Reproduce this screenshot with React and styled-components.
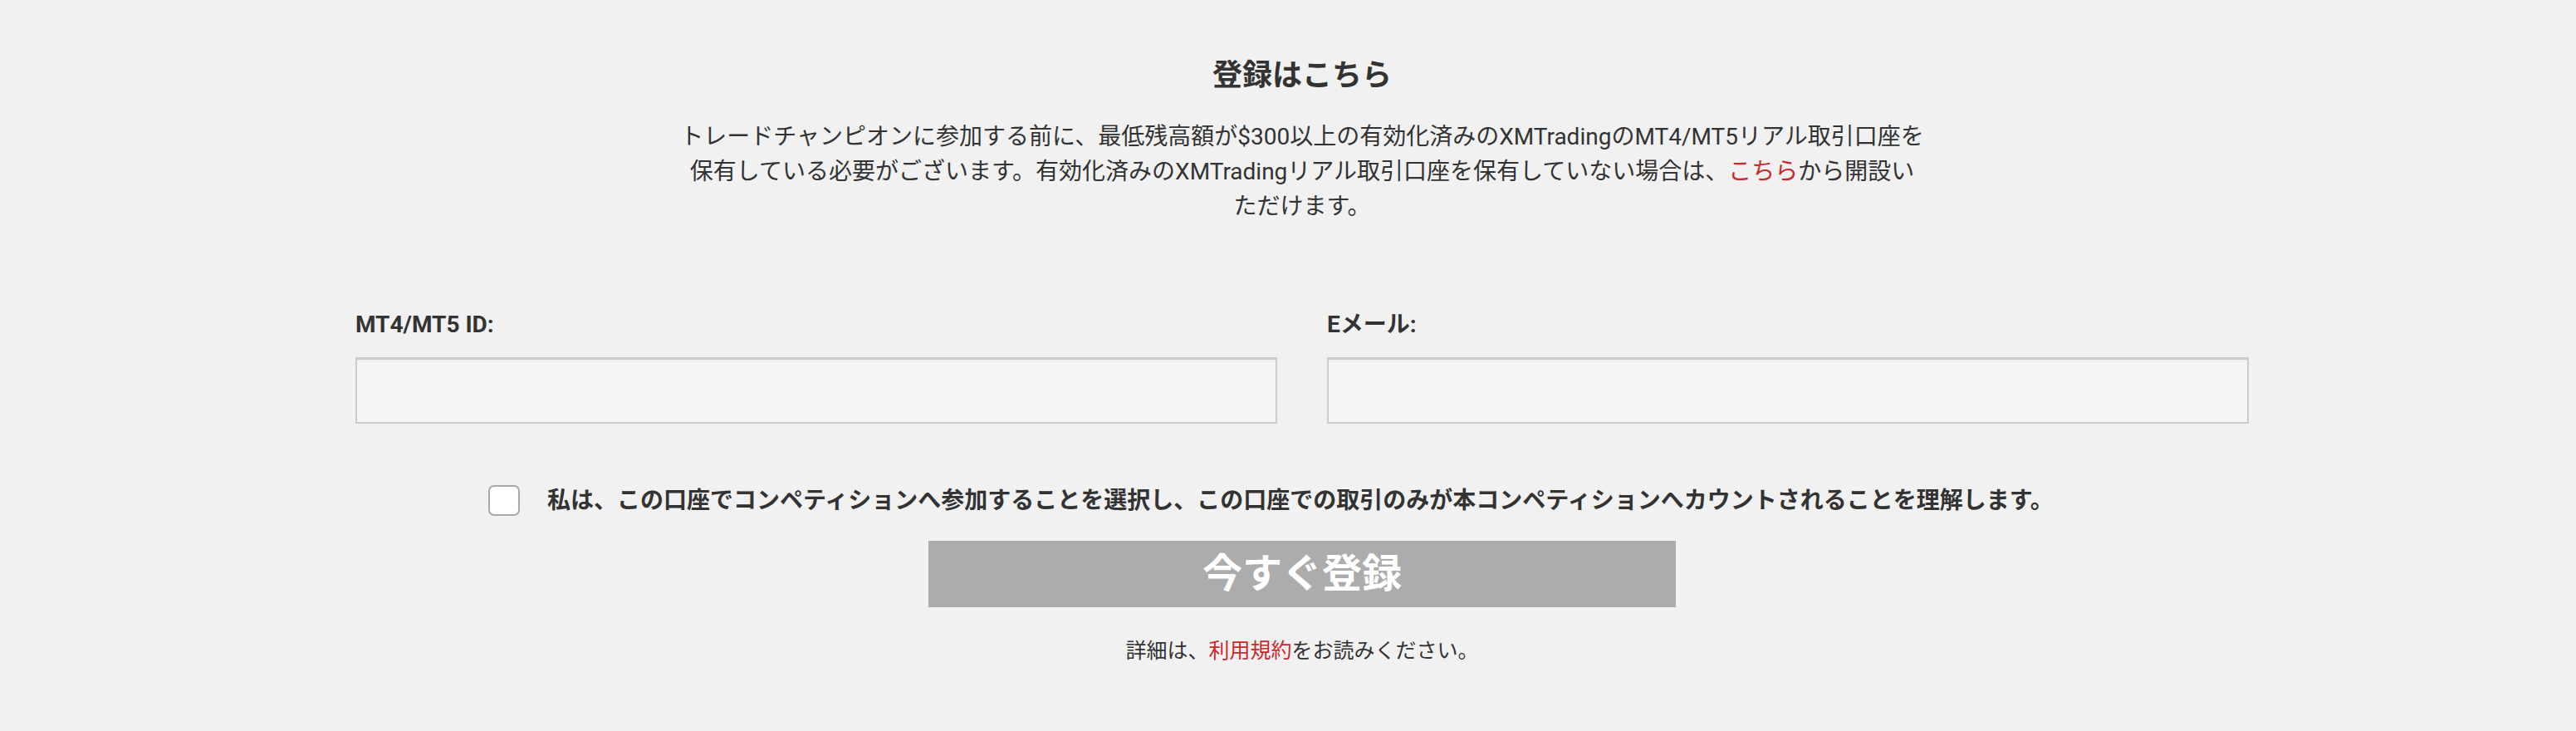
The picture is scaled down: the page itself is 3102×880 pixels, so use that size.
import React from "react";
import styled, { createGlobalStyle } from "styled-components";

const GlobalStyle = createGlobalStyle`
  html, body {
    margin: 0;
    padding: 0;
    background: #f1f1f1;
  }
  body {
    font-family: Roboto, "Noto Sans CJK JP", sans-serif;
    color: #333;
  }
`;

function App() {
  return (
    <>
      <GlobalStyle />
      <Page>
        <Register>
          <Title>登録はこちら</Title>
          <Intro>
            トレードチャンピオンに参加する前に、最低残高額が$300以上の有効化済みのXMTradingのMT4/MT5リアル取引口座を
            <br />
            保有している必要がございます。有効化済みのXMTradingリアル取引口座を保有していない場合は、
            <RedLink href="#">こちら</RedLink>から開設い
            <br />
            ただけます。
          </Intro>
          <Fields>
            <Field>
              <Label htmlFor="mt-id">MT4/MT5 ID:</Label>
              <TextInput id="mt-id" type="text" />
            </Field>
            <Field>
              <Label htmlFor="email">Eメール:</Label>
              <TextInput id="email" type="email" />
            </Field>
          </Fields>
          <Agree>
            <CheckBox type="checkbox" />
            <AgreeText>
              私は、この口座でコンペティションへ参加することを選択し、この口座での取引のみが本コンペティションへカウントされることを理解します。
            </AgreeText>
          </Agree>
          <SubmitButton type="button" disabled>
            今すぐ登録
          </SubmitButton>
          <Terms>
            詳細は、<RedLink href="#">利用規約</RedLink>をお読みください。
          </Terms>
        </Register>
      </Page>
    </>
  );
}

export default App;

const Page = styled.div`
  min-height: 880px;
  padding-left: 34px;
  box-sizing: border-box;
`;
const Register = styled.div`
  width: 2280px;
  margin: 0 auto;
  padding-top: 70px;
  display: flex;
  flex-direction: column;
  align-items: center;
`;
const Title = styled.h2`
  margin: 0;
  font-size: 36px;
  line-height: 42px;
  font-weight: 700;
  color: #333;
`;
const Intro = styled.p`
  margin: 32px 0 0;
  font-size: 28px;
  line-height: 42px;
  text-align: center;
  color: #333;
  white-space: nowrap;
`;
const RedLink = styled.a`
  color: #c9282d;
  text-decoration: none;
`;
const Fields = styled.div`
  width: 100%;
  margin-top: 104px;
  display: grid;
  grid-template-columns: 1fr 1fr;
  column-gap: 60px;
`;
const Field = styled.div`
  display: flex;
  flex-direction: column;
`;
const Label = styled.label`
  font-size: 28px;
  line-height: 34px;
  font-weight: 700;
  color: #333;
  margin-bottom: 22px;
`;
const TextInput = styled.input`
  height: 80px;
  box-sizing: border-box;
  border: 2px solid #cccccc;
  border-top-width: 3px;
  background: #f5f5f5;
  box-shadow: inset 0 2px 2px rgba(0, 0, 0, 0.03);
  outline: none;
  font-size: 28px;
  padding: 0 16px;
`;
const Agree = styled.label`
  align-self: flex-start;
  margin: 74px 0 0 160px;
  display: flex;
  align-items: center;
  gap: 33px;
`;
const CheckBox = styled.input`
  appearance: none;
  margin: 0;
  width: 38px;
  height: 37px;
  box-sizing: border-box;
  border: 2px solid #a8a8a8;
  border-radius: 7px;
  background: #fff;
`;
const AgreeText = styled.span`
  font-size: 28px;
  line-height: 34px;
  font-weight: 700;
  color: #333;
`;
const SubmitButton = styled.button`
  margin-top: 30px;
  width: 900px;
  height: 80px;
  border: none;
  background: #acacac;
  color: #fff;
  font-family: Roboto, "Noto Sans CJK JP", sans-serif;
  font-size: 48px;
  font-weight: 700;
  line-height: 80px;
  padding: 0;
`;
const Terms = styled.p`
  margin: 38px 0 0;
  font-size: 25px;
  line-height: 30px;
  color: #333;
`;
